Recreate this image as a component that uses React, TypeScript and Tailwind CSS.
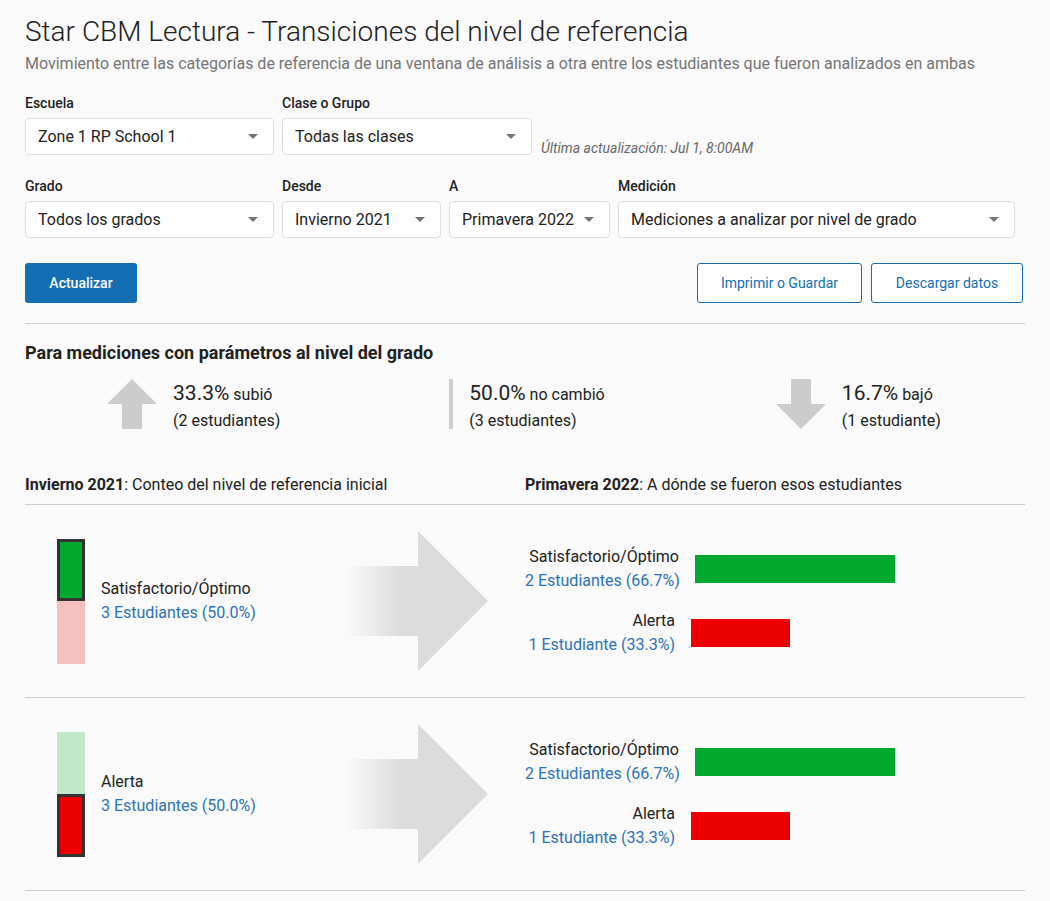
import React from "react";

type SelectProps = {
  label: string;
  value: string;
  width: string;
};

function Caret() {
  return (
    <svg width="10" height="5" viewBox="0 0 10 5" className="shrink-0">
      <path d="M0 0h10L5 5z" fill="#757575" />
    </svg>
  );
}

function Select({ label, value, width }: SelectProps) {
  return (
    <div className={`flex flex-col ${width}`}>
      <div className="text-[14px] leading-5 font-medium text-[#212121]">
        {label}
      </div>
      <div className="mt-[5px] flex h-[37px] items-center justify-between rounded-[4px] border border-[#dedede] bg-white pl-3 pr-[15px] text-[16px] text-[#212121]">
        <span className="truncate">{value}</span>
        <Caret />
      </div>
    </div>
  );
}

function UpArrow() {
  return (
    <svg width="50" height="50" viewBox="0 0 50 50" className="shrink-0">
      <polygon points="25,0 50,25 35,25 35,50 15,50 15,25 0,25" fill="#cccccc" />
    </svg>
  );
}

function DownArrow() {
  return (
    <svg width="50" height="50" viewBox="0 0 50 50" className="shrink-0">
      <polygon points="15,0 35,0 35,25 50,25 25,50 0,25 15,25" fill="#cccccc" />
    </svg>
  );
}

function BigArrow({ id }: { id: string }) {
  return (
    <svg width="143" height="140" viewBox="0 0 143 140" className="shrink-0">
      <defs>
        <linearGradient id={id} x1="0" x2="1" y1="0" y2="0">
          <stop offset="0" stopColor="#dcdcdc" stopOpacity="0" />
          <stop offset="0.75" stopColor="#dcdcdc" stopOpacity="1" />
        </linearGradient>
      </defs>
      <rect x="0" y="35" width="73" height="70" fill={`url(#${id})`} />
      <polygon points="72,0 142,70 72,140" fill="#dcdcdc" />
    </svg>
  );
}

function Stat({
  pct,
  word,
  count,
}: {
  pct: string;
  word: string;
  count: string;
}) {
  return (
    <div className="flex flex-col text-[#212121]">
      <div className="leading-[28px]">
        <span className="text-[21px]">{pct}</span>{" "}
        <span className="text-[16px]">{word}</span>
      </div>
      <div className="text-[16px] leading-6">{count}</div>
    </div>
  );
}

type Target = {
  name: string;
  count: string;
  labelW: string;
  barW: string;
  color: string;
};

const targets: Target[] = [
  {
    name: "Satisfactorio/Óptimo",
    count: "2 Estudiantes (66.7%)",
    labelW: "w-[154px]",
    barW: "w-[200px]",
    color: "bg-[#00a82d]",
  },
  {
    name: "Alerta",
    count: "1 Estudiante (33.3%)",
    labelW: "w-[150px]",
    barW: "w-[99px]",
    color: "bg-[#ee0000]",
  },
];

function TransitionRow({
  name,
  count,
  top,
  bottom,
  highlightTop,
  id,
}: {
  name: string;
  count: string;
  top: string;
  bottom: string;
  highlightTop: boolean;
  id: string;
}) {
  return (
    <div className="grid h-[193px] grid-cols-2 border-b border-[#cccccc]">
      <div className="flex items-center">
        <div className="ml-8 flex w-7 flex-col">
          <div
            className={`h-[62px] ${top} ${
              highlightTop ? "border-[3px] border-[#333333]" : ""
            }`}
          />
          <div
            className={`h-[63px] ${bottom} ${
              highlightTop ? "" : "border-[3px] border-[#333333]"
            }`}
          />
        </div>
        <div className="ml-4 flex-1 text-[16px] leading-6">
          <div className="text-[#212121]">{name}</div>
          <div className="text-[#2d72b8]">{count}</div>
        </div>
        <div className="mr-[36px]">
          <BigArrow id={id} />
        </div>
      </div>
      <div className="flex flex-col justify-center gap-4">
        {targets.map((t) => (
          <div key={t.name} className="flex items-center gap-4">
            <div className={`${t.labelW} text-right text-[16px] leading-6`}>
              <div className="text-[#212121]">{t.name}</div>
              <div className="whitespace-nowrap text-[#2d72b8]">{t.count}</div>
            </div>
            <div className={`h-7 ${t.barW} ${t.color}`} />
          </div>
        ))}
      </div>
    </div>
  );
}

export default function App() {
  return (
    <div className="min-h-[901px] bg-[#fafafa] px-[25px] pt-4 font-['Roboto',sans-serif] text-[#212121]">
      <h1 className="text-[28px] leading-8 font-light text-[#212121]">
        Star CBM Lectura - Transiciones del nivel de referencia
      </h1>
      <p className="mt-1 text-[16px] leading-6 text-[#757575]">
        Movimiento entre las categorías de referencia de una ventana de análisis
        a otra entre los estudiantes que fueron analizados en ambas
      </p>

      <div className="mt-[17px] flex items-end gap-2">
        <Select label="Escuela" value="Zone 1 RP School 1" width="w-[249px]" />
        <Select label="Clase o Grupo" value="Todas las clases" width="w-[250px]" />
        <div className="ml-[1px] text-[14px] italic leading-[14px] text-[#666666]">
          Última actualización: Jul 1, 8:00AM
        </div>
      </div>

      <div className="mt-[21px] flex gap-2">
        <Select label="Grado" value="Todos los grados" width="w-[249px]" />
        <Select label="Desde" value="Invierno 2021" width="w-[159px]" />
        <Select label="A" value="Primavera 2022" width="w-[161px]" />
        <Select
          label="Medición"
          value="Mediciones a analizar por nivel de grado"
          width="w-[397px]"
        />
      </div>

      <div className="mt-[25px] flex items-center">
        <button className="h-10 w-[112px] rounded-[3px] bg-[#146eb4] text-[14px] font-medium text-white">
          Actualizar
        </button>
        <div className="ml-auto mr-[2px] flex gap-[9px]">
          <button className="h-10 w-[165px] rounded-[3px] border border-[#146eb4] bg-white text-[14px] text-[#146eb4]">
            Imprimir o Guardar
          </button>
          <button className="h-10 w-[152px] rounded-[3px] border border-[#146eb4] bg-white text-[14px] text-[#146eb4]">
            Descargar datos
          </button>
        </div>
      </div>

      <div className="mt-5 border-t border-[#cccccc]" />

      <h2 className="mt-[17px] text-[18px] leading-6 font-bold text-[#212121]">
        Para mediciones con parámetros al nivel del grado
      </h2>

      <div className="mt-[14px] grid grid-cols-3">
        <div className="ml-1 flex items-start justify-center gap-4">
          <UpArrow />
          <Stat pct="33.3%" word="subió" count="(2 estudiantes)" />
        </div>
        <div className="ml-1 flex items-start justify-center gap-4">
          <div className="h-[50px] w-1 bg-[#cccccc]" />
          <Stat pct="50.0%" word="no cambió" count="(3 estudiantes)" />
        </div>
        <div className="flex items-start justify-center gap-4">
          <DownArrow />
          <Stat pct="16.7%" word="bajó" count="(1 estudiante)" />
        </div>
      </div>

      <div className="mt-10 grid grid-cols-2 border-b border-[#cccccc] pb-[7px] text-[16px] leading-6">
        <div>
          <span className="font-bold">Invierno 2021</span>: Conteo del nivel de
          referencia inicial
        </div>
        <div>
          <span className="font-bold">Primavera 2022</span>: A dónde se fueron
          esos estudiantes
        </div>
      </div>

      <TransitionRow
        id="g1"
        name="Satisfactorio/Óptimo"
        count="3 Estudiantes (50.0%)"
        top="bg-[#00a82d]"
        bottom="bg-[#f7c0c0]"
        highlightTop={true}
      />
      <TransitionRow
        id="g2"
        name="Alerta"
        count="3 Estudiantes (50.0%)"
        top="bg-[#c1e9c9]"
        bottom="bg-[#ee0000]"
        highlightTop={false}
      />
    </div>
  );
}
